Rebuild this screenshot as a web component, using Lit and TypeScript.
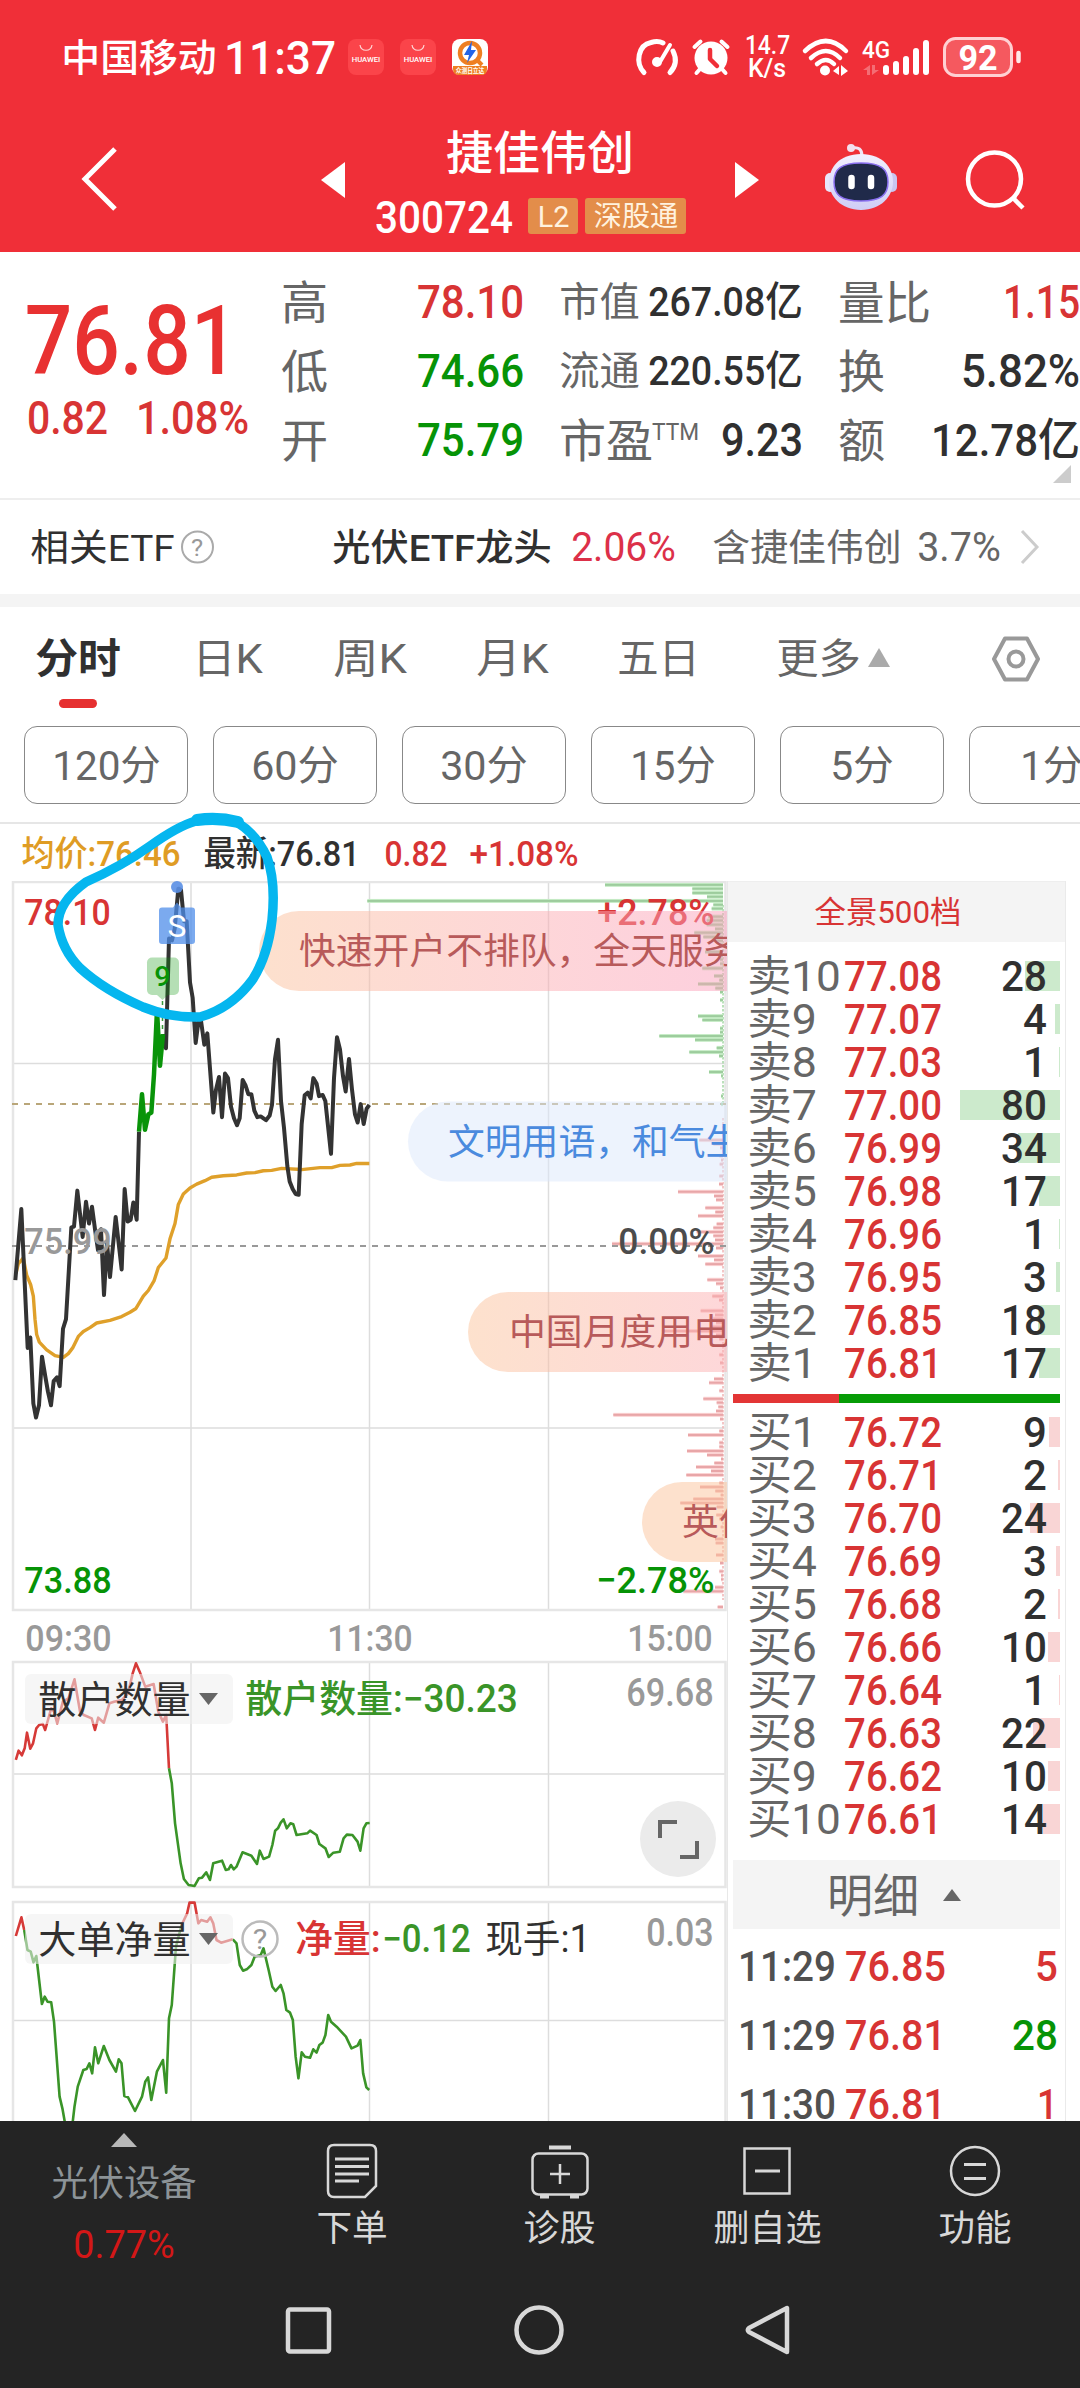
import { LitElement, html, svg, css } from "lit";
import { customElement } from "lit/decorators.js";

/* Text whose visible glyphs span exactly `w` pixels; `h` defaults to the font size. */
const line = (text: string, x: number, yc: number, w: number, size: number, cls = "") => svg`
  <text class=${cls} x=${x - size * 0.045} y=${yc + size * 0.36} font-size=${size}
    textLength=${w + size * 0.09} lengthAdjust="spacingAndGlyphs">${text}</text>`;

const fit = (text: string, w: number, size: number, cls = "") => html`
  <svg class="fit" width=${w} height=${size}>${line(text, 0, size / 2, w, size, cls)}</svg>`;

const textStyles = css`
  svg { display: block; overflow: visible; flex: none; }
  text, .fit { font-family: Roboto, "Noto Sans CJK SC", "Liberation Sans", sans-serif; }
  .m { font-weight: 500; }
  .b { font-weight: 700; }
  .red { fill: #d83434; }
  .hot { fill: #e83131; }
  .green { fill: #069306; }
  .leaf { fill: #3a9428; }
  .ink { fill: #303030; }
  .dim { fill: #666; }
  .pale { fill: #999; }
  .white { fill: #fff; }
`;

@customElement("status-bar")
class StatusBar extends LitElement {
  static styles = [textStyles, css`
    :host { display: block; height: 115px; }
    .row { display: grid; height: 114px; box-sizing: border-box; align-items: center;
      grid-template-columns: 163px 122px 52px 52px 184px 56px 54px 56px 61px 80px 80px; padding-left: 63px; }
  `];
  bag() {
    return html`<svg width="36" height="36" viewBox="0 0 36 36">
      <rect width="36" height="36" rx="8" fill="#fb444a"/>
      <path d="M12 6c1 7 11 7 12 0" fill="none" stroke="#ffd5d5" stroke-width="1.2"/>
      ${line("HUAWEI", 4, 20.5, 28, 7, "white m")}</svg>`;
  }
  render() {
    return html`<div class="row">
      ${fit("中国移动", 152, 38, "white m")}
      ${fit("11:37", 108, 46, "white m")}
      ${this.bag()}${this.bag()}
      <svg width="36" height="36" viewBox="0 0 36 36">
        <rect width="36" height="36" rx="8" fill="#fff"/>
        <circle cx="18" cy="14" r="10" fill="none" stroke="#ee7f22" stroke-width="4.5"/>
        <path d="M24 20l6 6" stroke="#ee7f22" stroke-width="4"/>
        <path d="M20 2l-8 14h5l-2 8 9-13h-5z" fill="#2365e8"/>
        <path d="M1 27h34v3q0 6-6 6H7q-6 0-6-6z" fill="#ee7f22"/>
        ${line("众测日立达", 4, 31.5, 28, 7, "white b")}
      </svg>
      <svg width="42" height="36" viewBox="0 0 42 36" fill="none" stroke="#fff" stroke-width="5" stroke-linecap="round">
        <path d="M8 33.500C-1 24 2 6 15 3.500Q22 1.500 27 4"/><path d="M34 33.500Q43 24 37 12"/>
        <path d="M34 6L24.500 22" stroke-width="4"/><circle cx="21" cy="23" r="2.500"/>
      </svg>
      <svg width="38" height="36" viewBox="0 0 38 36">
        <circle cx="19" cy="19" r="16.500" fill="#fff"/>
        <path d="M2.500 8l6-5.500M35.500 8l-6-5.500M8 30l-3.500 4M30 30l3.500 4" stroke="#fff" stroke-width="4" stroke-linecap="round"/>
        <path d="M18 11v9l7 7" fill="none" stroke="#f02f38" stroke-width="4.500" stroke-linecap="round" stroke-linejoin="round"/>
      </svg>
      <svg width="43" height="44" viewBox="0 0 43 44">${line("14.7", 0, 10, 43, 25, "white m")}${line("K/s", 3, 33, 36, 25, "white m")}</svg>
      <svg width="48" height="37" viewBox="0 0 48 37" fill="none" stroke="#fff" stroke-width="4.500" stroke-linecap="round">
        <path d="M3 12Q24-8 44 12M9 19Q24 5 38 19M15 25Q24 17 32 25"/>
        <circle cx="23" cy="31.500" r="5" fill="#fff" stroke="none"/>
        <path d="M37 27v9l-6-4zM39 26v11l7-5z" fill="#fff" stroke="none"/>
      </svg>
      <svg width="66" height="37" viewBox="0 0 66 37" stroke="#fff" stroke-width="6" stroke-linecap="round">
        <g stroke="none">${line("4G", 0, 10, 26, 24, "white m")}
        <path d="M0 31l7-5v10h-3v-5zM9 26v10l7-5h-4v-5z" fill="#fff" opacity=".3"/></g>
        <path d="M23 29v4M33 25v8M43 20v13M53 12v21M63 4v29"/>
      </svg>
      <svg width="78" height="40" viewBox="0 0 78 40">
        <rect x="1.500" y="1.500" width="67" height="37" rx="11" fill="#f5595f" stroke="#ffd0d2" stroke-width="3"/>
        <path d="M75.500 16v8" stroke="#ffe8e8" stroke-width="4.500" stroke-linecap="round"/>
        ${line("92", 17, 20, 36, 35, "white b")}
      </svg>
    </div>`;
  }
}

@customElement("title-bar")
class TitleBar extends LitElement {
  static styles = [textStyles, css`
    :host { display: flex; height: 137px; align-items: center; }
    .back { margin: -10px 0 0 81px; }
    .prev { margin: -7px 0 0 203px; }
    .name { width: 390px; display: flex; flex-direction: column; align-items: center; }
    .codes { display: flex; align-items: center; margin: 19px 17px 0 0; }
    .tag { display: flex; align-items: center; justify-content: center; height: 36px; width: 50px;
      background: #e38d4a; border-radius: 3px; margin-left: 17px; }
    .tag.wide { width: 101px; margin-left: 7px; }
    .cream { fill: #fff2df; }
    .next { margin-top: -7px; }
    .bot { margin: -13px 0 0 65px; }
    .find { margin: -8px 0 0 68px; }
  `];
  render() {
    return html`
      <svg class="back" width="36" height="66" viewBox="0 0 36 66"><path d="M34 3L4 33l30 30" fill="none" stroke="#fff" stroke-width="5"/></svg>
      <svg class="prev" width="25" height="36" viewBox="0 0 25 36"><path d="M25 0v36L1 18z" fill="#fff"/></svg>
      <div class="name">
        ${fit("捷佳伟创", 184, 46, "white m")}
        <div class="codes">
          ${fit("300724", 134, 45, "white m")}
          <span class="tag">${fit("L2", 29, 30, "cream")}</span>
          <span class="tag wide">${fit("深股通", 82, 28, "cream")}</span>
        </div>
      </div>
      <svg class="next" width="25" height="36" viewBox="0 0 25 36"><path d="M0 0v36l24-18z" fill="#fff"/></svg>
      <svg class="bot" width="72" height="66" viewBox="0 0 72 66">
        <defs><linearGradient id="shell" x2="0" y2="1"><stop offset="0" stop-color="#f2f0ff"/><stop offset="1" stop-color="#cfcdf5"/></linearGradient></defs>
        <path d="M27 4q10-2 10 8" fill="none" stroke="#f0e4f4" stroke-width="3"/><circle cx="26" cy="4" r="4" fill="#f3dfee"/>
        <rect x="0" y="29" width="10" height="19" rx="5" fill="#e8e6fb"/><rect x="62" y="29" width="10" height="19" rx="5" fill="#c9c6f0"/>
        <path d="M36 10C58 10 68 24 68 38S56 66 36 66 4 52 4 38 14 10 36 10z" fill="url(#shell)"/>
        <path d="M36 19c20 0 27 6 27 19s-7 19-27 19S9 51 9 38s7-19 27-19z" fill="#202a4a" stroke="#8a6ff0" stroke-width="1.500"/>
        <path d="M26.500 34v8M46 34v8" stroke="#fff" stroke-width="6.500" stroke-linecap="round"/>
      </svg>
      <svg class="find" width="62" height="62" viewBox="0 0 62 62" fill="none" stroke="#fff" stroke-width="4.500"><circle cx="29.500" cy="30" r="26.500"/><path d="M48 49l10 10"/></svg>`;
  }
}

@customElement("quote-panel")
class QuotePanel extends LitElement {
  static styles = [textStyles, css`
    :host { display: block; background: #fff; }
    .quote { display: flex; height: 248px; box-sizing: border-box; border-bottom: 2px solid #eee; position: relative; overflow: hidden; }
    .last { width: 283px; flex: none; box-sizing: border-box; padding: 39px 0 0 29px; }
    .change { display: grid; grid-template-columns: 109px 110px; margin-top: 7px; }
    .stats { display: grid; flex: none; padding-top: 15px; grid-template-columns: 136px 142px 89px 190px 93px 147px; grid-template-rows: repeat(3, 69px); align-items: center; }
    .ends { display: flex; justify-content: flex-end; }
    .c2 { width: 103px; }
    .c4 { width: 151px; }
    .c6 { width: 145px; }
    .pe { display: flex; }
    .pe .fit + .fit { margin: 2px 0 0 2px; }
    .corner { position: absolute; left: 1053px; top: 213px; }
    .etf { display: grid; height: 94px; align-items: center; border-bottom: 13px solid #f4f4f4;
      grid-template-columns: 149px 153px 239px 141px 205px 102px 20px; padding-left: 32px; }
    .rose { fill: #dc3049; }
  `];
  cell(label: any, value: any, k: string) {
    return html`<div>${label}</div><div class="ends ${k}">${value}</div>`;
  }
  render() {
    return html`
      <div class="quote">
        <div class="last">
          ${fit("76.81", 205, 96, "hot m")}
          <div class="change">${fit("0.82", 77, 47, "red m")}${fit("1.08%", 109, 47, "red m")}</div>
        </div>
        <div class="stats">
          ${this.cell(fit("高", 43, 46, "dim"), fit("78.10", 103, 47, "red m"), "c2")}
          ${this.cell(fit("市值", 77, 40, "dim"), fit("267.08亿", 151, 41, "ink m"), "c4")}
          ${this.cell(fit("量比", 89, 46, "dim"), fit("1.15", 73, 47, "red m"), "c6")}
          ${this.cell(fit("低", 43, 46, "dim"), fit("74.66", 103, 47, "green m"), "c2")}
          ${this.cell(fit("流通", 77, 40, "dim"), fit("220.55亿", 151, 41, "ink m"), "c4")}
          ${this.cell(fit("换", 43, 46, "dim"), fit("5.82%", 115, 47, "ink m"), "c6")}
          ${this.cell(fit("开", 43, 46, "dim"), fit("75.79", 103, 47, "green m"), "c2")}
          ${this.cell(html`<div class="pe">${fit("市盈", 90, 46, "dim")}${fit("TTM", 45, 24, "dim")}</div>`, fit("9.23", 78, 47, "ink m"), "c4")}
          ${this.cell(fit("额", 43, 46, "dim"), fit("12.78亿", 145, 45, "ink m"), "c6")}
        </div>
        <svg class="corner" width="18" height="18"><path d="M18 0v18H0z" fill="#ccc"/></svg>
      </div>
      <div class="etf">
        ${fit("相关ETF", 141, 37, "ink")}
        <svg width="33" height="34" viewBox="0 0 33 34"><circle cx="16.500" cy="17" r="15.500" fill="none" stroke="#aaa" stroke-width="2"/>${line("?", 11, 17, 10, 24, "pale")}</svg>
        ${fit("光伏ETF龙头", 216, 37, "ink m")}
        ${fit("2.06%", 101, 40, "rose")}
        ${fit("含捷佳伟创", 186, 37, "dim")}
        ${fit("3.7%", 80, 40, "dim")}
        <svg width="20" height="34" viewBox="0 0 20 34"><path d="M1 1l15 16L1 33" fill="none" stroke="#ccc" stroke-width="3"/></svg>
      </div>`;
  }
}

@customElement("period-tabs")
class PeriodTabs extends LitElement {
  static styles = [textStyles, css`
    :host { display: block; overflow: hidden; }
    .tabs { display: grid; height: 119px; box-sizing: border-box; padding: 31px 0 0 37px; align-items: start;
      grid-template-columns: 157px 141px 143px 141px 159px 90px 124px 50px; }
    .mark { width: 38px; height: 9px; border-radius: 5px; background: #e63030; margin: 20px 0 0 22px; }
    .more { margin-top: 10px; }
    .gear { margin-top: -2px; }
    .chips { display: flex; gap: 25px; padding-left: 24px; width: 1110px; height: 96px; border-bottom: 2px solid #e6e6e6; }
    .chip { width: 164px; height: 78px; box-sizing: border-box; border: 1.500px solid #888; border-radius: 13px; flex: none;
      display: flex; align-items: center; justify-content: center; }
  `];
  render() {
    const chips: [string, number][] = [["120分", 105], ["60分", 84], ["30分", 84], ["15分", 82], ["5分", 60], ["1分", 59]];
    return html`
      <div class="tabs">
        <div>${fit("分时", 82, 41, "ink b")}<div class="mark"></div></div>
        ${fit("日K", 67, 41, "dim")}${fit("周K", 70, 41, "dim")}${fit("月K", 69, 41, "dim")}
        ${fit("五日", 79, 41, "dim")}${fit("更多", 81, 41, "dim")}
        <svg class="more" width="22" height="19"><path d="M11 0l11 19H0z" fill="#aaa"/></svg>
        <svg class="gear" width="48" height="46" viewBox="0 0 48 46" fill="none" stroke="#999" stroke-width="4" stroke-linejoin="round"><path d="M13 2.500h22L46 23 35 43.500H13L2 23z"/><circle cx="24" cy="23" r="7.500"/></svg>
      </div>
      <div class="chips">${chips.map(([t, w]) => html`<div class="chip">${fit(t, w, 41, "dim")}</div>`)}</div>`;
  }
}

const PRICE_A = "46,1098 64,912 83,1275 91,1248 100,1420 108,1457 117,1425 126,1298 136,1350 144,1390 153,1425 161,1362 171,1352 179,1375 189,1225 198,1200 214,960 222,958 232,864 248,985 258,893 267,950 276,906 285,965 294,1020 303,965 312,1137 321,1000 330,1090 347,933 365,1070 374,860 383,945 392,940 400,895 410,940 417,710";
const PRICE_UP = "417,710 426,612 435,705 445,665 454,660 462,560 471,392 480,538 489,455";
const PRICE_B = "489,455 498,492 507,205 516,210 524,180 535,75 543,78 552,160 560,160 570,320 578,360 587,478 597,410 603,420 613,483 622,453 640,660 648,600 657,567 666,672 675,558 684,570 693,645 702,675 711,693 719,675 728,575 737,590 745,612 754,612 763,655 772,672 782,670 798,680 809,668 816,640 825,520 834,470 843,630 852,700 862,800 869,840 878,860 887,873 896,875 905,690 914,615 923,608 932,623 940,570 950,585 957,617 968,614 976,630 993,768 1002,570 1011,463 1020,495 1029,565 1037,605 1047,520 1056,600 1065,665 1073,686 1082,638 1091,690 1100,650 1108,640";
const AVERAGE = "48,1080 55,1055 62,1048 70,1040 80,1085 92,1110 100,1140 105,1200 110,1240 118,1260 140,1280 165,1295 190,1300 205,1290 218,1275 235,1245 250,1232 270,1222 290,1210 330,1203 365,1193 390,1182 408,1172 430,1140 445,1125 462,1100 475,1065 498,1040 510,990 525,950 535,900 550,873 570,857 590,847 615,838 635,829 670,825 710,823 740,818 765,817 790,812 815,811 845,806 905,809 960,804 995,804 1020,798 1050,797 1070,793 1108,793";
const HOLDERS_UP = "34,1080 40,1052 47,1066 53,1045 58,998 65,1046 71,1030 78,985 84,975 92,972 97,990 103,960 110,925 116,935 123,970 135,905 147,895 160,838 172,935 180,945 197,955 204,990 211,953 223,968 235,910 245,905 262,900 275,880 285,820 292,790 300,815 312,860 330,852 340,935 350,965 357,945 363,1105";
const HOLDERS_DOWN = "363,1105 369,1150 376,1270 388,1390 395,1437 405,1455 418,1458 427,1435 434,1433 443,1417 451,1440 458,1390 477,1382 485,1410 491,1408 496,1395 502,1408 508,1400 521,1357 540,1367 552,1392 558,1352 566,1377 578,1370 585,1335 591,1292 597,1285 603,1268 609,1258 616,1285 624,1270 630,1273 637,1305 660,1300 666,1292 680,1305 686,1332 699,1345 706,1371 716,1358 730,1355 738,1315 745,1304 757,1305 768,1325 774,1352 781,1285 787,1270 794,1269";
const NET_RED = ["34,168 46,112 52,150", "390,135 402,100 407,68 418,68 426,130 432,120 445,125 452,112 458,130 465,180 475,188 500,178"];
const NET_GREEN = ["52,150 59,210 66,215 72,247 78,228 90,372 96,350 102,365 110,367 116,425 128,650 134,685 141,740 155,740 160,680 167,620 179,570 186,567 192,550 198,580 204,502 211,550 223,498 235,540 249,575 255,538 261,550 267,648 275,652 290,693 305,650 312,605 318,592 325,660 337,575 350,540 357,638 363,415 369,375 378,200 390,135",
  "500,178 508,190 515,255 522,272 530,268 540,255 547,230 560,225 566,205 577,270 585,320 592,333 603,315 609,340 615,390 623,398 629,420 635,530 641,595 648,517 655,530 666,533 673,508 680,518 686,495 693,488 699,465 705,405 711,425 723,440 743,470 755,505 768,497 774,480 780,580 787,622 793,630"];

/* Volume by price: offset from the chart top, then bar start (both in thirds of a pixel across). */
const ASKS = [[65, 735], [75, 997], [86, 997], [96, 1041], [107, 22], [117, 1060], [127, 1055], [148, 1045], [158, 1040], [169, 1040], [180, 1065], [190, 1003], [201, 1030], [211, 1065], [221, 1080], [240, 1035], [250, 1080], [260, 1080], [271, 1080], [283, 1027], [303, 1062], [314, 1078], [324, 1014], [335, 1066], [345, 1080], [366, 1080], [408, 1014], [418, 1027], [440, 1080], [450, 1080], [460, 898], [470, 1005], [491, 1070], [502, 988], [512, 1077], [554, 1047], [564, 1083], [617, 1083], [638, 1083]];
const BIDS = [[732, 1018], [742, 1060], [752, 1080], [773, 1078], [784, 1083], [795, 1079], [826, 1078], [847, 1077], [867, 954], [878, 1062], [888, 1068], [909, 1036], [920, 1066], [930, 1014], [951, 1070], [961, 1060], [972, 1010], [982, 1060], [993, 1065], [1003, 756], [1014, 1068], [1035, 1014], [1045, 1062], [1056, 1036], [1097, 1042], [1107, 1068], [1118, 1080], [1140, 1057], [1150, 1077], [1178, 1022], [1189, 1065], [1199, 1060], [1209, 1068], [1220, 1050], [1231, 912], [1241, 1068], [1252, 1078], [1293, 1078], [1314, 1080], [1356, 1062], [1366, 1047], [1387, 1078], [1408, 1030], [1418, 1070], [1429, 1075], [1440, 1068], [1450, 760], [1461, 1080]];
const BIDS_LOW = [[63, 508], [75, 414], [98, 508], [110, 508], [123, 411], [135, 471], [147, 513], [159, 493], [171, 438], [183, 483], [195, 409], [219, 508], [231, 450], [243, 496], [255, 512], [267, 430], [279, 391], [291, 500], [315, 499], [327, 508], [351, 512], [387, 495], [399, 497], [435, 498], [459, 510], [484, 508], [496, 513], [508, 513], [532, 495], [544, 400], [591, 503]];

@customElement("stock-charts")
class StockCharts extends LitElement {
  static styles = [textStyles, css`
    :host { display: block; width: 727px; height: 1240px; overflow: hidden; }
    .plot { overflow: hidden; }
    .grid { stroke: #ddd; stroke-width: 1.500; }
    .frame { stroke: #e6e6e6; stroke-width: 2.500; fill: none; }
    .curve { fill: none; stroke-linejoin: round; }
    .curve polyline { vector-effect: non-scaling-stroke; }
    .warn { fill: #b85a5a; }
    .calm { fill: #4a8ade; }
    .zero { fill: #4c4c4c; }
  `];
  bar(y: number, x: number, up: boolean) {
    return svg`<rect x=${x} y=${y - 2} width=${723 - x} height="4" fill=${up ? "#c6ecc6" : "#fbd3d3"}/>
      <rect x=${x} y=${y - 1} width=${723 - x} height="2" fill=${up ? "#9dcc9d" : "#e8a6a8"}/>`;
  }
  bubble(x: number, y: number, fill: string, tx: number, text: string, cls: string) {
    return svg`<rect x=${x} y=${y} width="900" height="80" rx="40" fill=${fill} fill-opacity=".5"/>
      <text class=${cls} x=${tx} y=${y + 53} font-size="36.8">${text}</text>`;
  }
  frame(y1: number, y2: number, rows: number[]) {
    return svg`${[191, 369.500, 548.500].map((x) => svg`<line class="grid" x1=${x} x2=${x} y1=${y1} y2=${y2}/>`)}
      ${rows.map((y) => svg`<line class="grid" x1="12" x2="726" y1=${y} y2=${y}/>`)}
      <rect class="frame" x="13" y=${y1} width="712.5" height=${y2 - y1}/>`;
  }
  selector(y: number, text: string) {
    return svg`<rect x="25" y=${y} width="208" height="50" rx="6" fill="#eee" fill-opacity=".55"/>
      ${line(text, 40, y + 25.500, 149, 38, "ink")}
      <path d=${`M199 ${y + 19}h19l-9.500 12z`} fill="#666"/>`;
  }
  render() {
    return html`<svg class="plot" width="727" height="1240" viewBox="0 881 727 1240">
      <defs>
        <linearGradient id="warm" gradientUnits="userSpaceOnUse" x1="259" x2="726"><stop offset="0" stop-color="#fbc29c"/><stop offset=".65" stop-color="#fcacb4"/><stop offset="1" stop-color="#fba0bc"/></linearGradient>
        <linearGradient id="peach" gradientUnits="userSpaceOnUse" x1="468" x2="726"><stop offset="0" stop-color="#fbc49c"/><stop offset="1" stop-color="#fcb0b4"/></linearGradient>
      </defs>
      ${this.frame(882, 1610, [1063.500, 1428])}
      ${this.frame(1662, 1887, [1774])}
      ${this.frame(1902, 2140, [2020.500])}
      <path d="M12 1104H726" stroke="#b9a679" stroke-width="1.800" stroke-dasharray="6 6"/>
      <path d="M723 905V1103" stroke="#a5d6a5" stroke-dasharray="2.500 1.500" stroke-width="1.500"/>
      <path d="M723 1118V1600" stroke="#efb4b4" stroke-dasharray="2.500 1.500" stroke-width="1.500"/>
      ${ASKS.map(([y, x]) => this.bar(860 + y / 2.6133, 360 + x / 3, true))}
      ${BIDS.map(([y, x]) => this.bar(860 + y / 2.6133, 360 + x / 3, false))}
      ${BIDS_LOW.map(([y, x]) => this.bar(1410 + y / 3, 550 + x / 3, false))}
      <path d="M12 1246H726" stroke="#999" stroke-width="1.800" stroke-dasharray="6 6"/>
      <g class="curve" transform="translate(0 860) scale(.33333 .38266)">
        <polyline points=${AVERAGE} stroke="#dfa02a" stroke-width="3.400"/>
        <polyline points=${PRICE_A} stroke="#333" stroke-width="4"/>
        <polyline points=${PRICE_B} stroke="#333" stroke-width="4"/>
        <polyline points=${PRICE_UP} stroke="#099409" stroke-width="4.500"/>
      </g>
      ${line("78.10", 26, 912, 83, 37, "red m")}
      ${line("75.99", 26, 1241, 84, 37, "pale m")}
      ${line("73.88", 26, 1580, 84, 37, "green m")}
      ${line("+2.78%", 599, 912, 114, 37, "red m")}
      ${line("0.00%", 620, 1241, 93, 37, "zero m")}
      <rect x="147" y="957.500" width="32" height="37.500" rx="5" fill="#099409" fill-opacity=".3"/>
      <path d="M157 995h11l-5.500 5z" fill="#099409" fill-opacity=".3"/>
      <path d="M162.500 1001v32" stroke="#3a9a3a" stroke-width="1.500" stroke-dasharray="4 4"/>
      ${line("9", 155.500, 975.500, 14, 28, "green m")}
      <circle cx="177" cy="887" r="6" fill="#5a8fe4" fill-opacity=".9"/>
      <path d="M162 907.500h11l4-5 4 5h11q3 0 3 3V941q0 3-3 3h-30q-3 0-3-3v-30.500q0-3 3-3z" fill="#4f8ee9" fill-opacity=".75"/>
      ${line("S", 169, 925, 16, 32, "white")}
      ${this.bubble(259, 911, "url(#warm)", 299, "快速开户不排队，全天服务", "warn")}
      ${this.bubble(408, 1101.500, "#dbe8fb", 448, "文明用语，和气生", "calm")}
      ${this.bubble(468, 1292, "url(#peach)", 509, "中国月度用电", "warn")}
      ${this.bubble(642, 1482, "#fbc49c", 682, "英伟", "warn")}
      ${line("−2.78%", 598, 1580, 115, 37, "green m")}
      ${line("09:30", 27, 1637.500, 83, 37, "pale m")}
      ${line("11:30", 329, 1637.500, 82, 37, "pale m")}
      ${line("15:00", 629, 1637.500, 82, 37, "pale m")}

      <g class="curve" transform="translate(0 1400) scale(.46556 .33333)">
        <polyline points=${HOLDERS_UP} stroke="#d63a38" stroke-width="2.600"/>
        <polyline points=${HOLDERS_DOWN} stroke="#3a9428" stroke-width="2.600"/>
      </g>
      ${this.selector(1674, "散户数量")}
      ${line("散户数量:−30.23", 247, 1698, 269, 38, "leaf m")}
      ${line("69.68", 628, 1692.500, 84, 38, "pale m")}
      <circle cx="678" cy="1839" r="38" fill="#ebebeb"/>
      <path d="M660 1838v-16h17M697 1841v16h-17" fill="none" stroke="#666" stroke-width="4"/>

      <g class="curve" transform="translate(0 1880) scale(.46556 .33333)">
        ${NET_RED.map((p) => svg`<polyline points=${p} stroke="#d63a38" stroke-width="2.600"/>`)}
        ${NET_GREEN.map((p) => svg`<polyline points=${p} stroke="#3a9428" stroke-width="2.600"/>`)}
      </g>
      ${this.selector(1914, "大单净量")}
      <circle cx="260" cy="1939" r="17.500" fill="none" stroke="#bbb" stroke-width="2.500"/>
      ${line("?", 254, 1939, 12, 28, "pale")}
      ${line("净量:", 297, 1938, 82, 38, "red m")}
      ${line("−0.12", 384, 1938, 85, 38, "leaf m")}
      ${line("现手:1", 487, 1938, 102, 38, "ink")}
      ${line("0.03", 648, 1932.500, 64, 38, "pale m")}
    </svg>`;
  }
}

@customElement("order-book")
class OrderBook extends LitElement {
  static styles = [textStyles, css`
    :host { display: block; width: 339px; height: 1240px; box-sizing: border-box; border-left: 1.500px solid #e8e8e8; border-right: 1.500px solid #eaeaea; overflow: hidden; }
    .head { height: 61px; background: #f4f4f4; border-top: 1px solid #eee; display: flex; align-items: center; justify-content: center; padding: 0 17px 2px 0; box-sizing: border-box; }
    .side { padding: 12px 0 0; }
    .side.buy { padding: 7px 0 0; }
    .level { display: grid; grid-template-columns: 97px 100px 1fr; align-items: center; height: 43px; margin: 0 5px 0 21px; }
    .qty { display: grid; align-items: center; justify-items: end; }
    .qty > * { grid-area: 1 / 1; }
    .vol { height: 30px; background: #cceacc; }
    .buy .vol { background: #f9d5d5; }
    .qty .fit { margin-right: 15px; }
    .ratio { display: flex; height: 9px; margin: 10px 5px 0; }
    .ratio i { width: 106px; background: #e33535; }
    .ratio b { flex: 1; background: #069c06; }
    .detail { height: 69px; margin: 20px 5px 0; background: #f4f4f4; display: flex; align-items: center; padding-left: 96px; gap: 26px; box-sizing: border-box; }
    .tick { display: grid; grid-template-columns: 107px 97px 1fr; align-items: center; justify-items: start; height: 69px; margin: 0 9px 0 12px; }
    .detail + .tick { margin-top: 2px; }
    .tick > :last-child { justify-self: end; }
    .clock { fill: #505050; }
  `];
  level(side: string, n: number, price: string, qty: number) {
    return html`<div class="level">
      ${fit(side + n, n === 10 ? 90 : 66, 42, "dim")}
      ${fit(price, 94, 43, "red m")}
      <div class="qty"><div class="vol" style="width:${qty * 1.25}px"></div>${fit(String(qty), qty > 9 ? 42 : 20, 43, "ink m")}</div>
    </div>`;
  }
  render() {
    const sell: [string, number][] = [["77.08", 28], ["77.07", 4], ["77.03", 1], ["77.00", 80], ["76.99", 34], ["76.98", 17], ["76.96", 1], ["76.95", 3], ["76.85", 18], ["76.81", 17]];
    const buy: [string, number][] = [["76.72", 9], ["76.71", 2], ["76.70", 24], ["76.69", 3], ["76.68", 2], ["76.66", 10], ["76.64", 1], ["76.63", 22], ["76.62", 10], ["76.61", 14]];
    const ticks: [string, string, string, number, string][] = [["11:29", "76.85", "5", 19, "red m"], ["11:29", "76.81", "28", 42, "green m"], ["11:30", "76.81", "1", 17, "red m"]];
    return html`
      <div class="head">${fit("全景500档", 144, 31, "red")}</div>
      <div class="side">${sell.map(([p, q], i) => this.level("卖", 10 - i, p, q))}</div>
      <div class="ratio"><i></i><b></b></div>
      <div class="side buy">${buy.map(([p, q], i) => this.level("买", i + 1, p, q))}</div>
      <div class="detail">${fit("明细", 88, 46, "dim")}<svg width="18" height="12"><path d="M9 0l9 12H0z" fill="#666"/></svg></div>
      ${ticks.map(([t, p, q, w, c]) => html`<div class="tick">${fit(t, 94, 43, "clock m")}${fit(p, 97, 43, "red m")}${fit(q, w, 43, c)}</div>`)}`;
  }
}

@customElement("action-bar")
class ActionBar extends LitElement {
  static styles = [textStyles, css`
    :host { display: block; background: #242424; height: 267px; }
    .acts { display: grid; grid-template-columns: 248px 208px 207px 208px 207px; height: 152px; }
    .act { display: flex; flex-direction: column; align-items: center; padding-top: 22px; }
    .act .fit { margin-top: 11px; }
    .sector { display: flex; flex-direction: column; align-items: center; padding-top: 12px; }
    .sector .fit:nth-of-type(2) { margin-top: 18px; }
    .sector .fit:nth-of-type(3) { margin-top: 24px; }
    .slate { fill: #8c9397; }
    .alarm { fill: #d31717; }
    .light { fill: #d8d8d8; }
    .nav { display: flex; padding: 32px 0 0 284px; gap: 180px; }
    svg.o { fill: none; stroke: #d8d8d8; stroke-width: 2.500; }
  `];
  render() {
    return html`
      <div class="acts">
        <div class="sector">
          <svg width="26" height="14"><path d="M13 0l13 14H0z" fill="#b8b8b8"/></svg>
          ${fit("光伏设备", 142, 36, "slate")}
          ${fit("0.77%", 98, 38, "alarm")}
        </div>
        <div class="act"><svg class="o" width="56" height="56" viewBox="0 0 56 56"><path d="M10 2h36q6 0 6 6v35L41 54H10q-6 0-6-6V8q0-6 6-6z"/><path d="M11 16h34M11 23.500h34M11 31h34M11 38h24" stroke-width="3"/></svg>${fit("下单", 68, 36, "light")}</div>
        <div class="act"><svg class="o" width="58" height="56" viewBox="0 0 58 56"><path d="M18 4.500h22" stroke-width="4"/><rect x="1.500" y="10.500" width="55" height="41" rx="6"/><path d="M29 21v20M19 31h20"/><path d="M9 53.500h9M39 53.500h9" stroke-width="4"/></svg>${fit("诊股", 69, 36, "light")}</div>
        <div class="act"><svg class="o" width="48" height="56" viewBox="0 0 48 56"><rect x="1.500" y="5.500" width="45" height="45"/><path d="M12 28h25" stroke-width="3"/></svg>${fit("删自选", 105, 36, "light")}</div>
        <div class="act"><svg class="o" width="52" height="56" viewBox="0 0 52 56"><circle cx="26" cy="28" r="24"/><path d="M15 21.500h22M15 35.500h22" stroke-width="3"/></svg>${fit("功能", 70, 36, "light")}</div>
      </div>
      <div class="nav">
        <svg class="o" width="50" height="50" viewBox="0 0 50 50"><rect x="4" y="4.500" width="41" height="42" rx="2" stroke-width="4.500"/></svg>
        <svg class="o" width="50" height="50" viewBox="0 0 50 50"><circle cx="25" cy="25" r="22.500" stroke-width="4.500"/></svg>
        <svg class="o" width="50" height="50" viewBox="0 0 50 50"><path d="M43 3v44L5 27q-2.500-2 0-4z" stroke-width="4.500" stroke-linejoin="round"/></svg>
      </div>`;
  }
}

@customElement("app-root")
class AppRoot extends LitElement {
  static styles = [textStyles, css`
    :host { display: block; position: relative; width: 1080px; height: 2388px; overflow: hidden; background: #fff; }
    .top { background: #f02f38; height: 252px; }
    .summary { display: grid; grid-template-columns: 182px 181px 85px 110px; padding: 2px 0 0 23px; align-items: center; height: 57px; box-sizing: border-box; }
    .amber { fill: #df9c24; }
    .body { display: flex; height: 1240px; }
    .circle { position: absolute; left: 0; top: 800px; pointer-events: none; }
  `];
  render() {
    return html`
      <div class="top"><status-bar></status-bar><title-bar></title-bar></div>
      <quote-panel></quote-panel>
      <period-tabs></period-tabs>
      <div class="summary">
        ${fit("均价:76.46", 156, 35, "amber m")}
        ${fit("最新:76.81", 153, 35, "ink m")}
        ${fit("0.82", 60, 35, "red m")}
        ${fit("+1.08%", 106, 35, "red m")}
      </div>
      <div class="body"><stock-charts></stock-charts><order-book></order-book></div>
      <action-bar></action-bar>
      <svg class="circle" width="300" height="240" viewBox="0 800 300 240" fill="none" stroke="#05b6ef" stroke-linecap="round" stroke-linejoin="round">
        <path d="M196 821Q178 826 150 846T86 882Q58 902 58 925Q62 950 80 968Q104 990 143 1007Q170 1018 200 1017Q232 1008 253 979Q268 955 272 920Q276 882 267 857Q256 834 238 823" stroke-width="9.500"/>
        <path d="M197 820Q218 817 238 822" stroke-width="12"/>
      </svg>`;
  }
}
